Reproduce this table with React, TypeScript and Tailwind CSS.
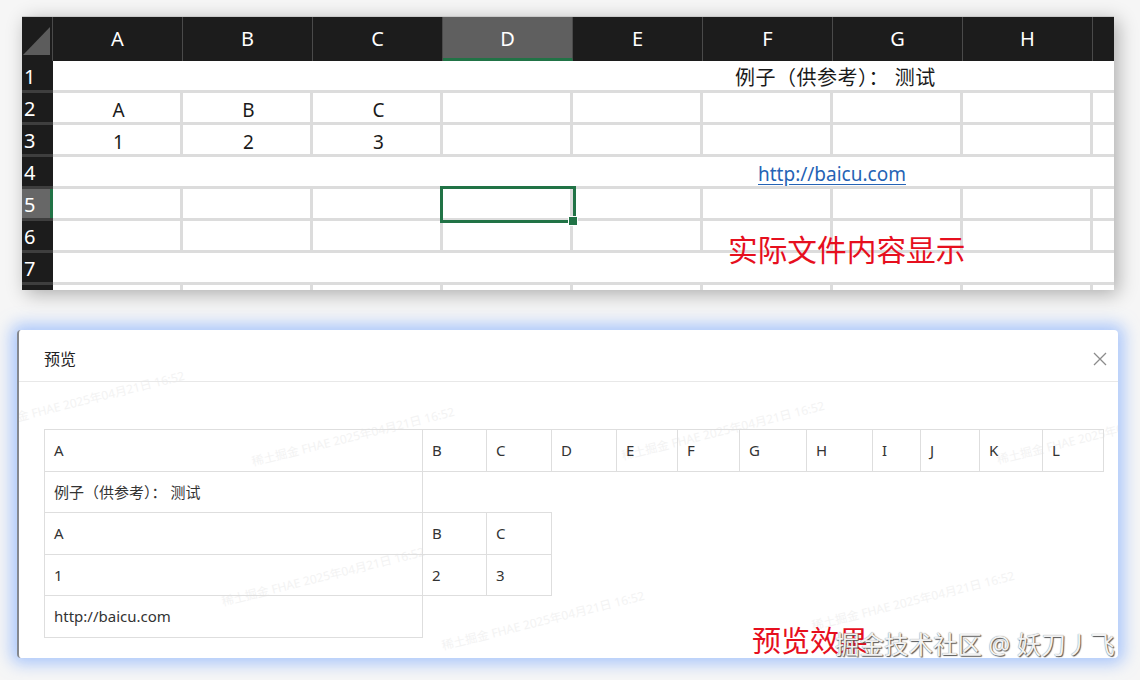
import React from 'react';

const FONT = "'Noto Sans','Noto Sans CJK SC',sans-serif";

const HEAD_COLS = ['A', 'B', 'C', 'D', 'E', 'F', 'G', 'H'];

// preview table column widths, written out so tailwind picks them up
const PREVIEW_COLS: { label: string; w: string }[] = [
  { label: 'A', w: 'w-[378px]' },
  { label: 'B', w: 'w-[64px]' },
  { label: 'C', w: 'w-[65px]' },
  { label: 'D', w: 'w-[65px]' },
  { label: 'E', w: 'w-[61px]' },
  { label: 'F', w: 'w-[62px]' },
  { label: 'G', w: 'w-[67px]' },
  { label: 'H', w: 'w-[66px]' },
  { label: 'I', w: 'w-[48px]' },
  { label: 'J', w: 'w-[59px]' },
  { label: 'K', w: 'w-[63px]' },
  { label: 'L', w: 'w-[61px]' },
];

// faint anti-leak watermark stamps scattered over the dialog
const WATERMARKS = [
  { pos: 'left-[-40px] top-[62px]' },
  { pos: 'left-[230px] top-[98px]' },
  { pos: 'left-[600px] top-[92px]' },
  { pos: 'left-[975px] top-[96px]' },
  { pos: 'left-[200px] top-[238px]' },
  { pos: 'left-[420px] top-[282px]' },
  { pos: 'left-[790px] top-[262px]' },
];

const Cell: React.FC<{ children?: React.ReactNode; className?: string }> = ({ children, className = '' }) => (
  <div className={`bg-white flex items-center justify-center pt-[5px] text-[19px] text-[#1a1a1a] ${className}`}>
    {children}
  </div>
);

const EmptyRow: React.FC = () => (
  <>
    {Array.from({ length: 9 }).map((_, i) => (
      <Cell key={i} />
    ))}
  </>
);

const Spreadsheet: React.FC = () => {
  const rowNums = [1, 2, 3, 4, 5, 6, 7, 8];
  return (
    <div className="relative ml-[22px] mt-[16px] w-[1092px] h-[274px] border-t border-[#c9c9c9] bg-[#dcdcdc] shadow-[4px_4px_18px_rgba(0,0,0,0.3)] overflow-hidden flex flex-col">
      {/* column headers */}
      <div className="flex h-[44px] bg-[#1c1c1c] text-white text-[20px] shrink-0">
        <div className="w-[31px] border-r border-[#4a4a4a] relative">
          <svg width="30" height="44" viewBox="0 0 30 44" className="absolute left-0 top-0">
            <polygon points="1,38 28,38 28,10" fill="#5c5c5c" />
          </svg>
        </div>
        {HEAD_COLS.map((c) => (
          <div
            key={c}
            className={`w-[130px] flex items-center justify-center border-r border-[#4a4a4a] ${
              c === 'D' ? 'bg-[#5f5f5f] border-b-[3px] border-b-[#217346] pt-[3px]' : ''
            }`}
          >
            {c}
          </div>
        ))}
        <div className="flex-1" />
      </div>

      {/* body */}
      <div className="flex flex-1 min-h-0">
        <div className="w-[31px] flex flex-col gap-[3px] bg-[#3e3e3e] text-white text-[20px]">
          {rowNums.map((n) => (
            <div
              key={n}
              className={`h-[29px] shrink-0 flex items-center pl-[2px] pt-[3px] ${
                n === 5 ? 'bg-[#676767] border-r-[3px] border-[#217346]' : 'bg-[#1c1c1c]'
              }`}
            >
              {n}
            </div>
          ))}
        </div>

        <div className="flex-1 grid grid-cols-[repeat(8,127px)_1fr] auto-rows-[29px] gap-[3px] bg-[#dcdcdc]">
          {/* row 1 merged */}
          <Cell className="col-span-9 justify-start pl-[682px] text-[20px] tracking-[0.5px]">例子（供参考）： 测试</Cell>
          {/* row 2 */}
          <Cell className="pl-[4px]">A</Cell>
          <Cell className="pl-[4px]">B</Cell>
          <Cell className="pl-[4px]">C</Cell>
          {Array.from({ length: 6 }).map((_, i) => (
            <Cell key={i} />
          ))}
          {/* row 3 */}
          <Cell className="pl-[4px]">1</Cell>
          <Cell className="pl-[4px]">2</Cell>
          <Cell className="pl-[4px]">3</Cell>
          {Array.from({ length: 6 }).map((_, i) => (
            <Cell key={i} />
          ))}
          {/* row 4 merged link */}
          <Cell className="col-span-9 justify-start pl-[705px]">
            <span className="text-[#2563b5] underline underline-offset-[3px]">http://baicu.com</span>
          </Cell>
          <EmptyRow />
          <EmptyRow />
          <Cell className="col-span-9" />
          <EmptyRow />
        </div>
      </div>

      {/* selection D5 */}
      <div className="absolute left-[418px] top-[169px] w-[136px] h-[37px] border-[3px] border-[#217346]" />
      <div className="absolute left-[546px] top-[199px] w-[10px] h-[10px] bg-[#217346] border border-white" />

      <div className="absolute left-[706px] top-[215px] text-[29.7px] leading-[35px] text-[#e60f1e]">实际文件内容显示</div>
    </div>
  );
};

const PreviewModal: React.FC = () => (
  <div className="relative ml-[17px] mt-[40px] w-[1101px] h-[328px] bg-white rounded-[4px] border-l-2 border-[#85888e] shadow-[0_0_16px_6px_rgba(110,160,255,0.55)] overflow-hidden">
    {WATERMARKS.map((m, i) => (
      <div
        key={i}
        className={`absolute ${m.pos} -rotate-[14deg] text-[12px] text-[#f3f3f3] whitespace-nowrap select-none`}
      >
        稀土掘金 FHAE 2025年04月21日 16:52
      </div>
    ))}

    <div className="relative h-[52px] border-b border-[#e8e8e8] flex items-start justify-between pl-[25px] pr-[10px] pt-[17px]">
      <span className="text-[16px] leading-[24px] text-[#222]">预览</span>
      <svg width="16" height="16" viewBox="0 0 16 16" className="mt-[4px]">
        <path d="M2 2 L14 14 M14 2 L2 14" stroke="#8c8c8c" strokeWidth="1.3" />
      </svg>
    </div>

    <div className="relative pl-[25px] pt-[47px]">
      <table className="w-[1059px] table-fixed border-collapse text-[15px] text-[#333]">
        <colgroup>
          {PREVIEW_COLS.map((c) => (
            <col key={c.label} className={c.w} />
          ))}
        </colgroup>
        <tbody>
          <tr className="h-[41.5px]">
            {PREVIEW_COLS.map((c) => (
              <td key={c.label} className="border border-[#dedede] px-[9px]">
                {c.label}
              </td>
            ))}
          </tr>
          <tr className="h-[41.5px]">
            <td className="border border-[#dedede] px-[9px]">例子（供参考）： 测试</td>
          </tr>
          <tr className="h-[41.5px]">
            <td className="border border-[#dedede] px-[9px]">A</td>
            <td className="border border-[#dedede] px-[9px]">B</td>
            <td className="border border-[#dedede] px-[9px]">C</td>
          </tr>
          <tr className="h-[41.5px]">
            <td className="border border-[#dedede] px-[9px]">1</td>
            <td className="border border-[#dedede] px-[9px]">2</td>
            <td className="border border-[#dedede] px-[9px]">3</td>
          </tr>
          <tr className="h-[41.5px]">
            <td className="border border-[#dedede] px-[9px]">http://baicu.com</td>
          </tr>
        </tbody>
      </table>
    </div>

    <div className="absolute left-[733px] top-[293px] text-[29px] leading-[35px] text-[#e60f1e] whitespace-nowrap">预览效果</div>
    <div className="absolute left-[816px] top-[300px] text-[24.5px] leading-[30px] text-[#f2f2f2] whitespace-nowrap [text-shadow:1px_1px_1px_#555,0_0_1px_#777]">
      掘金技术社区 @ 妖刀丿飞
    </div>
  </div>
);

export default function App() {
  return (
    <div className="w-[1140px] h-[680px] overflow-hidden bg-[#f6f6f6] flex flex-col" style={{ fontFamily: FONT }}>
      <Spreadsheet />
      <PreviewModal />
    </div>
  );
}
